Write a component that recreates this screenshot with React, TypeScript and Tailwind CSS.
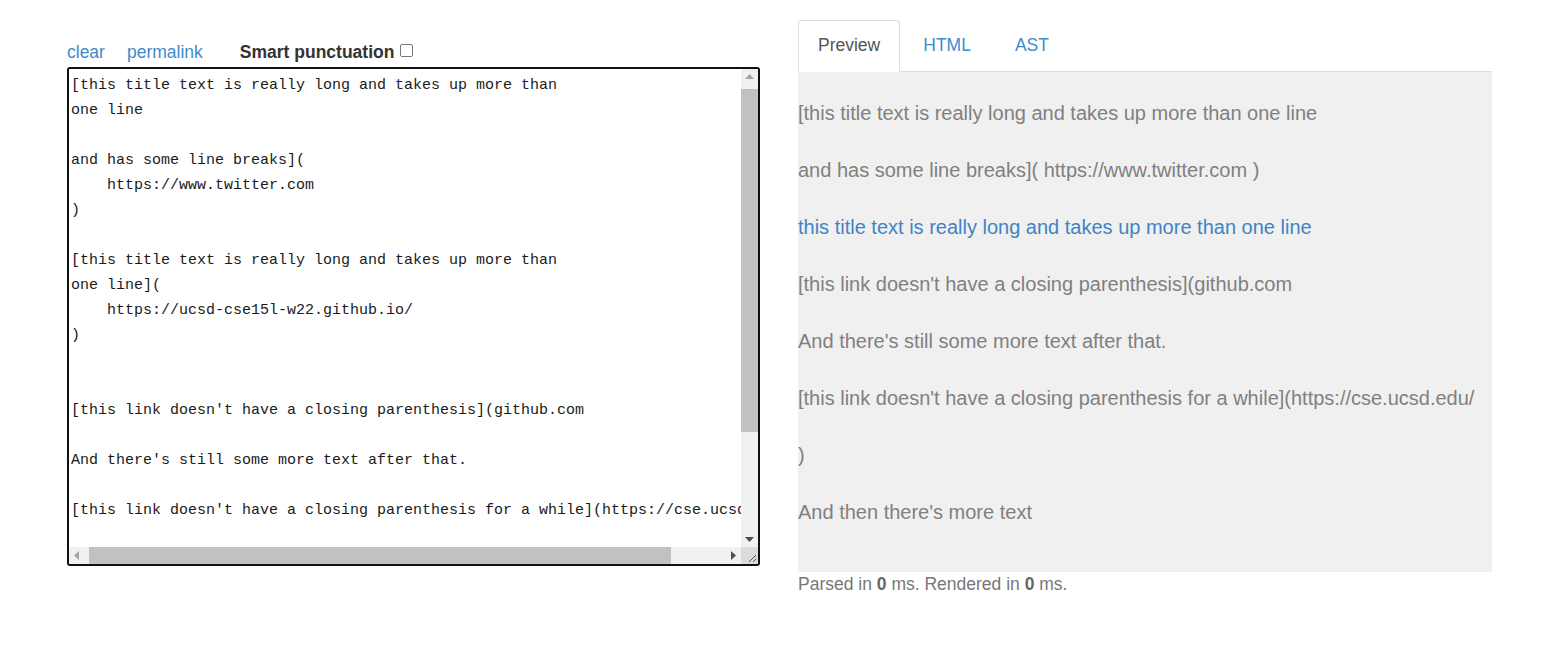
import React from 'react';

const source = [
  '[this title text is really long and takes up more than',
  'one line',
  '',
  'and has some line breaks](',
  '    https://www.twitter.com',
  ')',
  '',
  '[this title text is really long and takes up more than',
  'one line](',
  '    https://ucsd-cse15l-w22.github.io/',
  ')',
  '',
  '',
  "[this link doesn't have a closing parenthesis](github.com",
  '',
  "And there's still some more text after that.",
  '',
  "[this link doesn't have a closing parenthesis for a while](https://cse.ucsd.edu/",
  '',
  ')',
];

function Arrow({ dir, dark }: { dir: 'up' | 'down' | 'left' | 'right'; dark?: boolean }) {
  const pts = {
    up: '4,10 8.5,5 13,10',
    down: '4,7 8.5,12 13,7',
    left: '10,4 5,8.5 10,13',
    right: '7,4 12,8.5 7,13',
  }[dir];
  return (
    <div className="w-[17px] h-[17px] flex items-center justify-center shrink-0">
      <svg viewBox="0 0 17 17" className="w-[17px] h-[17px]">
        <polygon points={pts} fill={dark ? '#505050' : '#a3a3a3'} />
      </svg>
    </div>
  );
}

function Editor() {
  return (
    <div className="mt-[2px] w-[693px] h-[499px] border-2 border-[#111] rounded-[3px] bg-white flex flex-col overflow-hidden">
      <div className="flex flex-1 min-h-0">
        {/* text */}
        <div className="flex-1 overflow-hidden pl-[2px] pt-[4px]">
          <pre className="font-['Liberation_Mono',monospace] text-[15px] leading-[25px] text-[#1a1a1a] whitespace-pre">
            {source.join('\n')}
          </pre>
        </div>
        {/* vertical scrollbar */}
        <div className="w-[17px] bg-[#f1f1f1] flex flex-col">
          <Arrow dir="up" />
          <div className="mt-[3px] h-[343px] bg-[#c1c1c1]" />
          <div className="flex-1" />
          <Arrow dir="down" dark />
        </div>
      </div>
      {/* horizontal scrollbar */}
      <div className="h-[17px] flex">
        <div className="flex-1 bg-[#f1f1f1] flex">
          <Arrow dir="left" />
          <div className="ml-[3px] w-[582px] bg-[#c1c1c1]" />
          <div className="flex-1" />
          <Arrow dir="right" dark />
        </div>
        <div className="w-[17px] bg-[#dcdcdc] flex items-end justify-end">
          <svg viewBox="0 0 17 17" className="w-[17px] h-[17px]">
            <line x1="8" y1="15" x2="15" y2="8" stroke="#505050" strokeWidth="1" />
            <line x1="12" y1="15" x2="15" y2="12" stroke="#505050" strokeWidth="1" />
          </svg>
        </div>
      </div>
    </div>
  );
}

function Preview() {
  const para = 'leading-[29px] mb-[28px]';
  return (
    <div className="h-[500px] bg-[#f0f0f0] pt-[27px] text-[20px] text-[#808080]">
      <p className={para}>[this title text is really long and takes up more than one line</p>
      <p className={para}>and has some line breaks]( https://www.twitter.com )</p>
      <p className={para}>
        <a className="text-[#4183c4]">this title text is really long and takes up more than one line</a>
      </p>
      <p className={para}>[this link doesn't have a closing parenthesis](github.com</p>
      <p className={para}>And there's still some more text after that.</p>
      <p className={para}>[this link doesn't have a closing parenthesis for a while](https://cse.ucsd.edu/</p>
      <p className={para}>)</p>
      <p className={para}>And then there's more text</p>
    </div>
  );
}

export default function App() {
  return (
    <div className="min-h-[652px] bg-white font-['Liberation_Sans',Arial,sans-serif]">
      <div className="flex items-start pl-[67px] pt-[20px] gap-[38px]">
        {/* Left column */}
        <div className="w-[693px] pt-[20px]">
          <div className="flex items-center h-[25px] text-[17.5px]">
            <a className="text-[#428bca]">clear</a>
            <a className="ml-[22px] text-[#428bca]">permalink</a>
            <label className="ml-[37px] flex items-center font-bold text-[17.5px] text-[#333]">
              Smart punctuation
              <span className="ml-[6px] -mt-[4px] w-[13px] h-[13px] border border-[#767676] rounded-[2px] bg-white" />
            </label>
          </div>
          <Editor />
        </div>

        {/* Right column */}
        <div className="w-[694px]">
          <div className="flex border-b border-[#ddd] text-[17.5px] leading-[25px]">
            <div className="-mb-px px-[19px] py-[12px] border border-[#ddd] border-b-white bg-white rounded-t-[4px] text-[#555]">
              Preview
            </div>
            <div className="ml-[2px] px-[20px] py-[12px] border border-transparent text-[#428bca]">HTML</div>
            <div className="ml-[2px] px-[20px] py-[12px] border border-transparent text-[#428bca]">AST</div>
          </div>
          <Preview />
          <div className="h-[25px] leading-[25px] text-[17.5px] text-[#777]">
            Parsed in <b className="text-[#666]">0</b> ms. Rendered in <b className="text-[#666]">0</b> ms.
          </div>
        </div>
      </div>
    </div>
  );
}
